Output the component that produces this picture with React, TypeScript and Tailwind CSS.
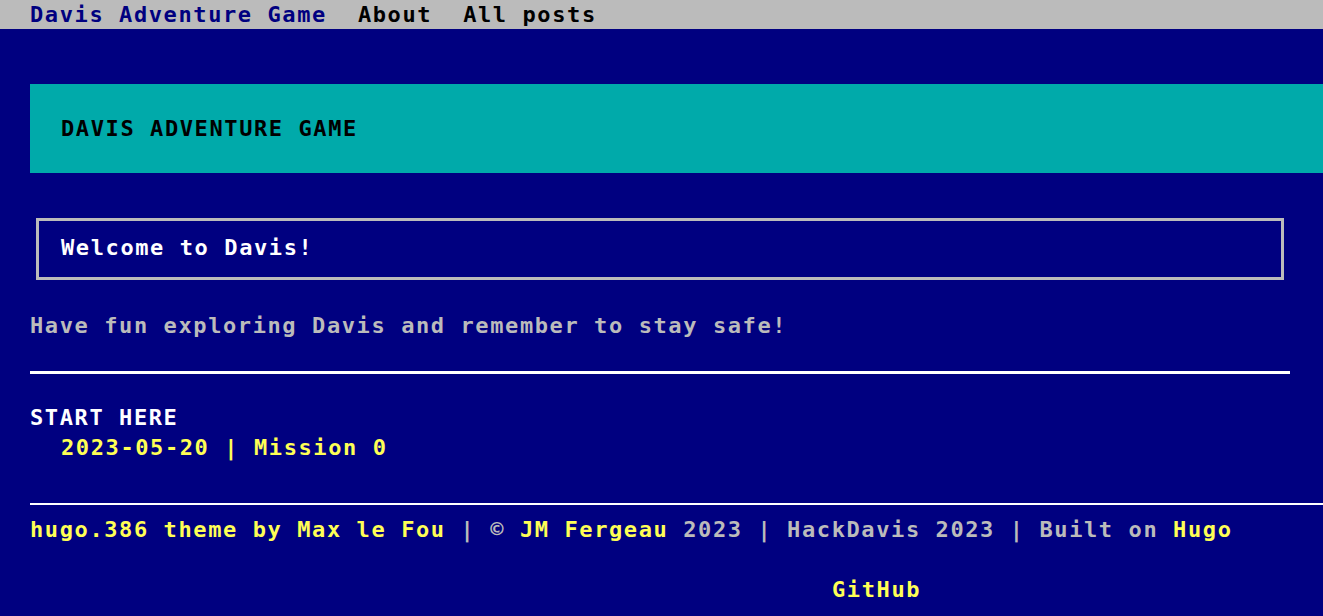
import React from "react";

export default function App() {
  const font = { fontFamily: '"DejaVu Sans Mono", "Liberation Mono", monospace' };
  return (
    <div
      className="min-h-[616px] w-full bg-[#000080] text-[22px] font-bold leading-[30px] tracking-[1.6px] text-[#bbbbbb]"
      style={font}
    >
      <nav className="flex h-[29px] items-start bg-[#bbbbbb] pl-[30px] pt-[1px] leading-[28px]">
        <a className="text-[#000080]">Davis Adventure Game</a>
        <a className="ml-[31px] text-black">About</a>
        <a className="ml-[31px] text-black">All posts</a>
      </nav>

      <div className="pl-[30px] pt-[55px]">
        <header className="bg-[#00aaaa] pb-[29px] pl-[31px] pt-[30px] text-black">
          DAVIS ADVENTURE GAME
        </header>

        <div className="mr-[39px] mt-[45px] ml-[6px] border-[3px] border-[#bbbbbb] pb-[14px] pl-[22px] pt-[12px] text-white">
          Welcome to Davis!
        </div>

        <p className="mt-[31px]">Have fun exploring Davis and remember to stay safe!</p>

        <div className="mr-[33px] mt-[30px] h-[3px] bg-white" />

        <div className="mt-[29px] text-white">START HERE</div>
        <div className="pl-[31px] text-[#ffff55]">2023-05-20 | Mission 0</div>

        <div className="mt-[40px] h-[2px] bg-white" />

        <footer className="pt-[10px]">
          <div>
            <span className="text-[#ffff55]">hugo.386 theme by Max le Fou</span>
            <span> | © </span>
            <span className="text-[#ffff55]">JM Fergeau</span>
            <span> 2023 | HackDavis 2023 | Built on </span>
            <span className="text-[#ffff55]">Hugo</span>
          </div>
          <div className="mt-[30px] pl-[802px] text-[#ffff55]">GitHub</div>
        </footer>
      </div>
    </div>
  );
}
